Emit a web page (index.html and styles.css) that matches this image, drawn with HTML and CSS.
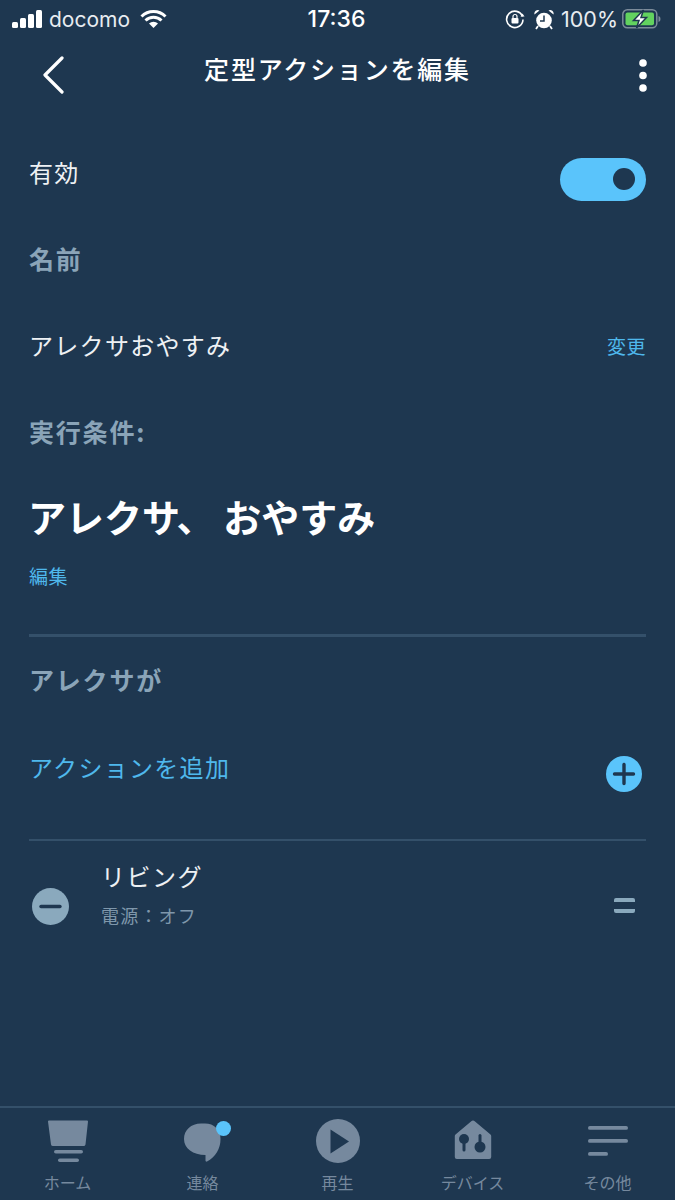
FILE: index.html
```html
<!DOCTYPE html>
<html lang="ja">
<head>
  <meta charset="UTF-8">
  <title>定型アクションを編集</title>
  <link rel="stylesheet" href="styles.css">
</head>
<body>
<div class="statusBar">
  <div class="statusLeft">
    <svg class="signal" width="30" height="20" viewBox="0 0 30 20">
      <rect x="0" y="13" width="6" height="6" rx="1.5"/>
      <rect x="8" y="9" width="6" height="10" rx="1.5"/>
      <rect x="16" y="5" width="6" height="14" rx="1.5"/>
      <rect x="24" y="1" width="6" height="18" rx="1.5"/>
    </svg>
    <span class="carrier">docomo</span>
    <svg class="wifi" width="27" height="20" viewBox="0 0 27 20">
      <path d="M1.5 7.5a17 17 0 0 1 24 0M5.5 11.5a11.500 11.500 0 0 1 16 0" fill="none" stroke="#fff" stroke-width="3"/>
      <path d="M9 14.500a6.500 6.500 0 0 1 9 0l-4.500 4.500z" fill="#fff"/>
    </svg>
  </div>
  <div class="statusTime">17:36</div>
  <div class="statusRight">
    <svg width="20" height="20" viewBox="0 0 20 20">
      <path d="M17.500 7.500a8.200 8.200 0 1 0 .5 3" fill="none" stroke="#fff" stroke-width="1.600"/>
      <path d="M15.500 7.500h4l-2-3z" fill="#fff"/>
      <rect x="6.500" y="9" width="7" height="5.500" rx="1" fill="#fff"/>
      <path d="M8 9V7.500a2 2 0 0 1 4 0V9" fill="none" stroke="#fff" stroke-width="1.200"/>
    </svg>
    <svg class="alarm" width="20" height="21" viewBox="0 0 20 21">
      <circle cx="10" cy="11.500" r="7.800" fill="#fff"/>
      <path d="M10 6.500v5.500H6" fill="none" stroke="#1e3750" stroke-width="1.500"/>
      <path d="M0.500 5.500a3.500 3.500 0 0 1 5-4zM19.500 5.500a3.500 3.500 0 0 0-5-4z" fill="#fff"/>
      <path d="M4 17l-2 3M16 17l2 3" stroke="#fff" stroke-width="1.800"/>
    </svg>
    <span class="battery">100%</span>
    <svg width="39" height="20" viewBox="0 0 39 20">
      <rect x="0.800" y="0.800" width="34" height="18" rx="4.500" fill="none" stroke="#7c8b9a" stroke-width="1.500"/>
      <rect x="3.500" y="3.500" width="28.500" height="12.800" rx="2" fill="#62d25f"/>
      <path d="M36.500 7v6a3 3 0 0 0 2-3 3 3 0 0 0-2-3z" fill="#7c8b9a"/>
      <path d="M21.500 1l-10 10.500h5.500L14.500 19l10-10.500H19z" fill="#fff" stroke="#1e3750" stroke-width="1.500"/>
    </svg>
  </div>
</div>

<header class="topBar">
  <svg class="back" width="24" height="38" viewBox="0 0 24 38">
    <path d="M21 2L4 19l17 17" fill="none" stroke="#fff" stroke-width="3.200" stroke-linecap="round" stroke-linejoin="round"/>
  </svg>
  <h1>定型アクションを編集</h1>
  <svg class="more" width="8" height="34" viewBox="0 0 8 34">
    <circle cx="4" cy="4" r="3.800" fill="#fff"/>
    <circle cx="4" cy="16.500" r="3.800" fill="#fff"/>
    <circle cx="4" cy="29" r="3.800" fill="#fff"/>
  </svg>
</header>

<main class="content">
  <div class="row first">
    <span class="label">有効</span>
    <div class="toggle"><div class="knob"></div></div>
  </div>
  <div class="row"><span class="sectionTitle">名前</span></div>
  <div class="row">
    <span class="label">アレクサおやすみ</span>
    <a class="link">変更</a>
  </div>
  <div class="row"><span class="sectionTitle">実行条件:</span></div>
  <div class="phrase">アレクサ、 おやすみ</div>
  <a class="link editLink">編集</a>
  <div class="thickLine"></div>
  <div class="row"><span class="sectionTitle">アレクサが</span></div>
  <div class="row addRow">
    <span class="label addLabel">アクションを追加</span>
    <svg class="plus" width="36" height="36" viewBox="0 0 36 36">
      <circle cx="18" cy="18" r="18" fill="#5ac4fb"/>
      <path d="M18 8.500v19M8.500 18h19" stroke="#1e3750" stroke-width="3.400" stroke-linecap="round"/>
    </svg>
  </div>
  <div class="thinLine"></div>
  <div class="actionItem">
    <svg class="minus" width="37" height="37" viewBox="0 0 37 37">
      <circle cx="18.500" cy="18.500" r="18.500" fill="#8aa9bd"/>
      <path d="M9 18.500h19" stroke="#1e3750" stroke-width="3.400" stroke-linecap="round"/>
    </svg>
    <div class="actionText">
      <div class="actionName">リビング</div>
      <div class="actionDetail">電源：オフ</div>
    </div>
    <div class="dragHandle"></div>
  </div>
</main>

<nav class="tabBar">
  <a class="tab">
    <svg width="48" height="48" viewBox="0 0 48 48">
      <path d="M5 3.500h38a1 1 0 0 1 1 1l-2.500 23a2 2 0 0 1-2 1.500H9a2 2 0 0 1-2-1.500L4 4.500a1 1 0 0 1 1-1z"/>
      <rect x="10" y="33" width="29" height="3.600" rx="1.800"/>
      <rect x="14" y="41.500" width="21" height="3.600" rx="1.800"/>
    </svg>
    <span>ホーム</span>
  </a>
  <a class="tab">
    <svg class="chat" width="48" height="48" viewBox="0 0 48 48">
      <path d="M22 6.500h4c9 0 15.500 6 15.500 15.500 0 10-5 18-13.500 22.500-.8.4-1.500 0-1.500-1V38C14 38 5 31.500 5 22 5 13 12 6.500 22 6.500z"/>
    </svg>
    <span class="badge"></span>
    <span>連絡</span>
  </a>
  <a class="tab">
    <svg width="48" height="48" viewBox="0 0 48 48">
      <circle cx="24" cy="24" r="22"/>
      <path class="cut" d="M16.500 12.500v24L35 24.500z"/>
    </svg>
    <span>再生</span>
  </a>
  <a class="tab">
    <svg width="48" height="48" viewBox="0 0 48 48">
      <path d="M22 4.500a3 3 0 0 1 4 0l15.500 13a2 2 0 0 1 .7 1.500v21a2 2 0 0 1-2 2H7.800a2 2 0 0 1-2-2V19a2 2 0 0 1 .7-1.500z"/>
      <circle class="cut" cx="15" cy="22" r="5"/>
      <rect class="cut" x="13.500" y="24" width="3" height="10.500" rx="1.500"/>
      <circle class="cut" cx="31" cy="30" r="5.500"/>
      <rect class="cut" x="29.500" y="17" width="3" height="13" rx="1.500"/>
    </svg>
    <span>デバイス</span>
  </a>
  <a class="tab">
    <svg width="48" height="48" viewBox="0 0 48 48">
      <rect x="4" y="9" width="40" height="3.800" rx="1.900"/>
      <rect x="4" y="22" width="40" height="3.800" rx="1.900"/>
      <rect x="4" y="35" width="20" height="3.800" rx="1.900"/>
    </svg>
    <span>その他</span>
  </a>
</nav>
</body>
</html>
```

FILE: styles.css
```css
* {
  box-sizing: border-box;
}
body {
  margin: 0;
  width: 675px;
  height: 1200px;
  overflow: hidden;
  display: flex;
  flex-direction: column;
  background-color: #1e3750;
  color: #fff;
  font-family: "Noto Sans CJK JP", "Noto Sans", sans-serif;
}
svg {
  display: block;
  flex: none;
}

/* status bar */
.statusBar {
  height: 38px;
  display: flex;
  align-items: center;
  font-family: Inter, "Liberation Sans", sans-serif;
  font-size: 21px;
}
.statusLeft,
.statusRight {
  flex: 1;
  display: flex;
  align-items: center;
}
.statusLeft {
  padding-left: 12px;
}
.signal {
  fill: #fff;
}
.carrier {
  margin-left: 7px;
  color: #e8ecf0;
}
.wifi {
  margin-left: 10px;
}
.statusTime {
  font-weight: 500;
  font-size: 23px;
}
.statusRight {
  justify-content: flex-end;
  padding-right: 14px;
}
.alarm {
  margin-left: 9px;
}
.battery {
  font-size: 21.500px;
  margin: 0 4px 0 7px;
  color: #e8ecf0;
}

/* top bar */
.topBar {
  height: 62px;
  padding: 0 28px;
  display: grid;
  grid-template-columns: 1fr auto 1fr;
  align-items: center;
}
.topBar h1 {
  margin: 0;
  font-size: 25px;
  font-weight: 500;
  letter-spacing: 1.800px;
  line-height: 1;
  position: relative;
  top: -1px;
}
.back {
  margin: 12px 0 0 13px;
}
.more {
  justify-self: end;
  margin-top: 14px;
}

/* content */
.content {
  flex: 1;
  padding: 0 29px;
}
.row {
  height: 86.500px;
  padding-bottom: 3px;
  display: flex;
  align-items: center;
  justify-content: space-between;
}
.row.first {
  margin-top: 30px;
}
.label {
  font-size: 24px;
  letter-spacing: 1.300px;
  color: #eef1f4;
}
.sectionTitle {
  font-size: 25px;
  font-weight: 700;
  letter-spacing: 1.800px;
  color: #8aa4b8;
}
.link {
  font-size: 19px;
  letter-spacing: 0.5px;
  color: #4fb8ec;
}
.row .link {
  margin-top: 2px;
}
.toggle {
  width: 86px;
  height: 43px;
  padding-right: 11px;
  margin-top: 15px;
  border-radius: 22px;
  background-color: #5ac4fb;
  display: flex;
  align-items: center;
  justify-content: flex-end;
}
.knob {
  width: 22px;
  height: 22px;
  border-radius: 50%;
  background-color: #1e3750;
}
.phrase {
  height: 84px;
  padding-bottom: 5px;
  margin-left: -1px;
  display: flex;
  align-items: center;
  font-size: 38px;
  font-weight: 700;
}
.editLink {
  display: block;
  height: 32px;
  line-height: 32px;
}
.thickLine {
  height: 3px;
  margin-top: 42px;
  background-color: #34506a;
}
.addRow {
  align-items: flex-start;
}
.addLabel {
  color: #4fb8ec;
  padding-top: 25px;
}
.plus {
  margin: 32px 4px 0 0;
}
.thinLine {
  height: 2px;
  margin-top: 29px;
  background-color: #34506a;
}
.actionItem {
  display: flex;
  align-items: flex-start;
  height: 100px;
}
.minus {
  margin: 47px 32px 0 3px;
}
.actionText {
  flex: 1;
  margin-top: 17px;
}
.actionName {
  font-size: 24px;
  letter-spacing: 1.500px;
  line-height: 36px;
  color: #eef1f4;
}
.actionDetail {
  margin-top: 8px;
  font-size: 18px;
  letter-spacing: 1.200px;
  line-height: 26px;
  color: #7f97ab;
}
.dragHandle {
  width: 21px;
  height: 15px;
  margin: 57px 11px 0 0;
  border-top: 4px solid #8aa9bd;
  border-bottom: 4px solid #8aa9bd;
  border-radius: 2px;
}

/* tabs */
.tabBar {
  height: 94px;
  border-top: 2px solid #34506a;
  display: grid;
  grid-template-columns: repeat(5, 135px);
}
.tab {
  position: relative;
  display: flex;
  flex-direction: column;
  align-items: center;
  padding-top: 9px;
  font-size: 16px;
  line-height: 24px;
  color: #76899e;
}
.tab svg {
  fill: #76899e;
  margin-bottom: 5px;
}
.tab svg .cut {
  fill: #1e3750;
}
.badge {
  position: absolute;
  top: 13px;
  left: 81px;
  width: 15px;
  height: 15px;
  border-radius: 50%;
  background-color: #5ac4fb;
}
```
